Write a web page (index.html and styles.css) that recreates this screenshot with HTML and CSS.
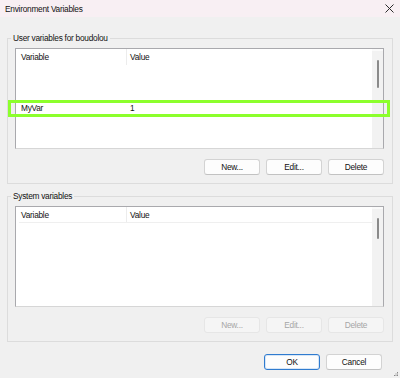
FILE: index.html
```html
<!DOCTYPE html>
<html lang="en">
<head>
  <meta charset="UTF-8">
  <title>Environment Variables</title>
  <link rel="stylesheet" href="styles.css">
</head>
<body>

<div class="window">
  <div class="titlebar">
    <span>Environment Variables</span>
    <svg class="close" width="9" height="9" viewBox="0 0 9 9">
      <path d="M0.5 0.5 L8.5 8.5 M8.5 0.5 L0.5 8.5" stroke="#2b2b2b" stroke-width="1" fill="none"/>
    </svg>
  </div>

  <div class="content">
    <div class="group">
      <div class="group-title">User variables for boudolou</div>
      <div class="list">
        <div class="list-body">
          <div class="list-head">
            <div class="col-var">Variable</div>
            <div class="col-val">Value</div>
          </div>
          <div class="list-row">
            <div class="col-var">MyVar</div>
            <div class="col-val">1</div>
            <span class="highlight"></span>
          </div>
        </div>
        <div class="scrollbar"><div class="thumb"></div></div>
      </div>
      <div class="buttons">
        <button class="btn">New...</button>
        <button class="btn">Edit...</button>
        <button class="btn">Delete</button>
      </div>
    </div>

    <div class="group system">
      <div class="group-title">System variables</div>
      <div class="list">
        <div class="list-body">
          <div class="list-head ruled">
            <div class="col-var">Variable</div>
            <div class="col-val">Value</div>
          </div>
        </div>
        <div class="scrollbar"><div class="thumb short"></div></div>
      </div>
      <div class="buttons">
        <button class="btn" disabled>New...</button>
        <button class="btn" disabled>Edit...</button>
        <button class="btn" disabled>Delete</button>
      </div>
    </div>

    <div class="footer">
      <button class="btn default">OK</button>
      <button class="btn">Cancel</button>
    </div>
  </div>

  <svg class="grip" width="5" height="5" viewBox="0 0 5 5">
    <rect x="3" y="0" width="1" height="1" fill="#888"/>
    <rect x="1.5" y="1.5" width="1" height="1" fill="#888"/>
    <rect x="3" y="1.5" width="1" height="1" fill="#888"/>
    <rect x="0" y="3" width="1" height="1" fill="#888"/>
    <rect x="1.5" y="3" width="1" height="1" fill="#888"/>
    <rect x="3" y="3" width="1" height="1" fill="#888"/>
  </svg>
</div>

</body>
</html>
```

FILE: styles.css
```css
* {
  box-sizing: border-box;
  margin: 0;
  padding: 0;
}

body {
  font-family: 'Liberation Sans', Arial, sans-serif;
  font-size: 8.3px;
  letter-spacing: -0.25px;
  color: #111;
  background: #f0f0f0;
}

.window {
  position: relative;
  width: 400px;
  height: 378px;
  background: #f0f0f0;
  overflow: hidden;
}

.titlebar {
  height: 17px;
  background: #f8eff3;
  display: flex;
  align-items: center;
  justify-content: space-between;
  padding: 0 6px 0 5px;
}

.content {
  padding: 21px 7px 0 7px;
}

.group {
  border: 1px solid #dcdcdc;
  padding: 0 8px 8px 7px;
}

.group.system {
  margin-top: 12px;
}

.group-title {
  width: fit-content;
  margin: -6px 0 0 -4px;
  padding: 0 2px;
  line-height: 11px;
  background: #f0f0f0;
}

.list {
  display: flex;
  height: 101px;
  margin-top: 4px;
  background: #fff;
  border: 1px solid #a9a9ad;
  border-bottom-color: #d6d6d6;
}

.list-body {
  flex: 1;
  position: relative;
}

.list-head,
.list-row {
  display: flex;
}

.list-head {
  height: 16px;
  line-height: 16px;
}

.list-head.ruled {
  border-bottom: 1px solid #efefef;
  margin-left: 3px;
}

.list-head.ruled .col-var {
  width: 108px;
  padding-left: 2px;
}

.list-head .col-var {
  border-right: 1px solid #ececec;
}

.col-var {
  width: 111px;
  padding-left: 5px;
}

.col-val {
  padding-left: 3px;
}

.list-row {
  position: relative;
  margin-top: 36px;
  height: 15px;
  line-height: 15px;
}

.highlight {
  position: absolute;
  top: -1px;
  bottom: -1px;
  left: -8px;
  right: -18px;
  border: 3px solid #8cff2c;
}

.scrollbar {
  width: 11px;
  background: #f2f2f2;
  border-top: 2px solid #fafafa;
}

.thumb {
  width: 2px;
  height: 28px;
  margin: 9px 0 0 5px;
  background: #8a8a8a;
  border-radius: 1px;
}

.thumb.short {
  height: 21px;
}

.buttons,
.footer {
  display: flex;
  justify-content: flex-end;
  gap: 6px;
}

.buttons {
  margin-top: 10px;
}

.footer {
  margin-top: 12px;
  padding-right: 11px;
}

.btn {
  width: 56px;
  height: 16px;
  font-family: inherit;
  font-size: 8.3px;
  letter-spacing: -0.25px;
  color: #111;
  background: #fdfdfd;
  border: 1px solid #d3d3d3;
  border-bottom-color: #c2c2c2;
  border-radius: 3px;
}

.btn:disabled {
  color: #a6a6a6;
  background: #f5f5f5;
  border-color: #e6e6e6;
}

.btn.default {
  border: 1px solid #2f7bcf;
  box-shadow: inset 0 0 0 1px #d7e6f6;
}

.grip {
  position: absolute;
  right: 1px;
  bottom: 1px;
}
```
